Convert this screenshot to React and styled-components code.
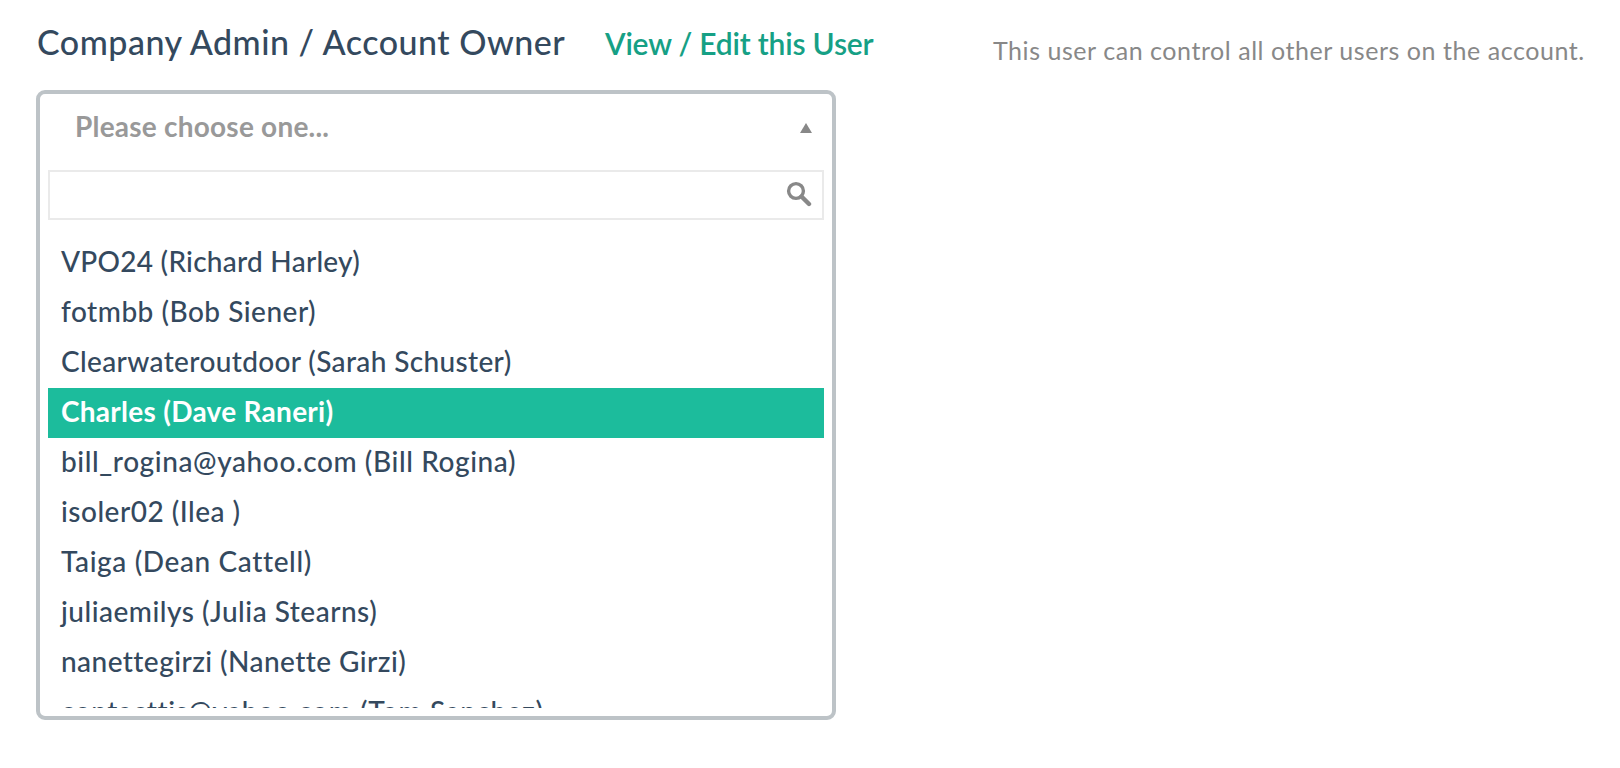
import React from "react";
import styled, { createGlobalStyle } from "styled-components";

const GlobalStyle = createGlobalStyle`
  * { box-sizing: border-box; }
  body {
    margin: 0;
    background: #fff;
    color: #34495e;
    font-family: Lato, "Open Sans", sans-serif;
    font-variant-ligatures: none;
  }
`;

const Page = styled.main`
  display: grid;
  grid-template-columns: 957px 1fr;
  height: 768px;
  padding-left: 36px;
  overflow: hidden;
`;

const Field = styled.section`
  display: flex;
  flex-direction: column;
`;

const FieldHeader = styled.header`
  display: flex;
  align-items: baseline;
  height: 90px;
  padding-top: 20px;
  white-space: nowrap;
`;

const Title = styled.h1`
  flex: none;
  width: 569px;
  margin: 0;
  padding-left: 1px;
  font-size: 34px;
  font-weight: 500;
  line-height: 44px;
  letter-spacing: 0.5px;
`;

const EditLink = styled.a`
  color: #16a085;
  font-size: 30px;
  font-weight: 600;
  line-height: 44px;
  letter-spacing: -0.2px;
  text-decoration: none;
`;

const Note = styled.p`
  margin: 0;
  padding-top: 29px;
  color: #888;
  font-size: 25px;
  line-height: 42px;
  letter-spacing: 0.55px;
  white-space: nowrap;
`;

const Select = styled.div`
  display: flex;
  flex-direction: column;
  width: 800px;
  height: 630px;
  padding: 0 8px 8px;
  border: 4px solid #bdc3c7;
  border-radius: 9px;
`;

const Trigger = styled.div`
  display: flex;
  flex: none;
  justify-content: space-between;
  height: 76px;
  padding: 9px 12px 0 27px;
  color: #999;
  font-size: 28px;
  font-weight: 700;
  line-height: 46px;
  letter-spacing: 0.22px;
`;

const Arrow = styled.svg`
  width: 12px;
  height: 10px;
  margin-top: 20px;
  fill: #888;
`;

const SearchBox = styled.div`
  display: flex;
  flex: none;
  align-items: center;
  height: 50px;
  padding: 0 10px 2px 0;
  border: 2px solid #eaeaea;
`;

const SearchInput = styled.input`
  flex: 1;
  min-width: 0;
  height: 40px;
  border: 0;
  outline: 0;
  background: transparent;
  font: inherit;
`;

const SearchIcon = styled.svg`
  width: 26px;
  height: 26px;
  fill: none;
  stroke: #888;
`;

const Options = styled.ul`
  flex: 1;
  min-height: 0;
  margin: 18px 0 0;
  padding: 0;
  overflow: hidden;
  list-style: none;
`;

const Option = styled.li`
  height: 50px;
  padding: 0 12px 4px 13px;
  background: ${({ $active }) => ($active ? "#1cbc9c" : "transparent")};
  color: ${({ $active }) => ($active ? "#fff" : "inherit")};
  font-size: 28px;
  font-weight: ${({ $active }) => ($active ? 700 : 500)};
  line-height: 46px;
  letter-spacing: ${({ $tracking }) => $tracking}px;
  white-space: pre;
`;

const users = [
  { label: "VPO24 (Richard Harley)", tracking: 0.26 },
  { label: "fotmbb (Bob Siener)", tracking: 0.5 },
  { label: "Clearwateroutdoor (Sarah Schuster)", tracking: 0.36 },
  { label: "Charles (Dave Raneri)", tracking: 0.28, active: true },
  { label: "bill_rogina@yahoo.com (Bill Rogina)", tracking: 0.6 },
  { label: "isoler02 (Ilea )", tracking: 0.5 },
  { label: "Taiga (Dean Cattell)", tracking: 0.62 },
  { label: "juliaemilys (Julia Stearns)", tracking: 0.5 },
  { label: "nanettegirzi (Nanette Girzi)", tracking: 0.44 },
  { label: "contacttis@yahoo.com (Tom Sanchez)", tracking: 0.6 },
];

export default function App() {
  return (
    <>
      <GlobalStyle />
      <Page>
        <Field>
          <FieldHeader>
            <Title>Company Admin / Account Owner</Title>
            <EditLink>View / Edit this User</EditLink>
          </FieldHeader>
          <Select>
            <Trigger>
              <span>Please choose one...</span>
              <Arrow viewBox="0 0 12 10">
                <path d="M6 0 12 10H0Z" />
              </Arrow>
            </Trigger>
            <SearchBox>
              <SearchInput aria-label="Search users" />
              <SearchIcon viewBox="0 0 26 26">
                <circle cx="10" cy="10" r="7.4" strokeWidth="3.4" />
                <path d="M15.5 15.5 23 23" strokeWidth="4.4" strokeLinecap="round" />
              </SearchIcon>
            </SearchBox>
            <Options>
              {users.map(({ label, tracking, active }) => (
                <Option key={label} $tracking={tracking} $active={active}>
                  {label}
                </Option>
              ))}
            </Options>
          </Select>
        </Field>
        <Note>This user can control all other users on the account.</Note>
      </Page>
    </>
  );
}
